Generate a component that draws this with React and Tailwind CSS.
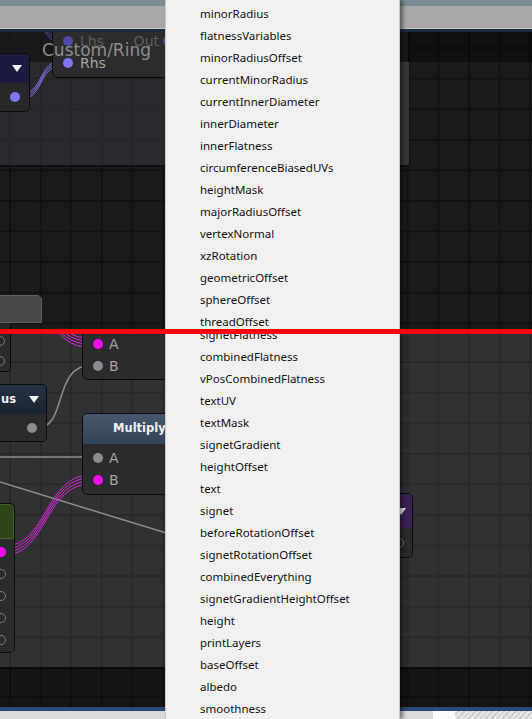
import React from "react";

const topItems = [
  "minorRadius",
  "flatnessVariables",
  "minorRadiusOffset",
  "currentMinorRadius",
  "currentInnerDiameter",
  "innerDiameter",
  "innerFlatness",
  "circumferenceBiasedUVs",
  "heightMask",
  "majorRadiusOffset",
  "vertexNormal",
  "xzRotation",
  "geometricOffset",
  "sphereOffset",
  "threadOffset",
];

const bottomItems = [
  "signetFlatness",
  "combinedFlatness",
  "vPosCombinedFlatness",
  "textUV",
  "textMask",
  "signetGradient",
  "heightOffset",
  "text",
  "signet",
  "beforeRotationOffset",
  "signetRotationOffset",
  "combinedEverything",
  "signetGradientHeightOffset",
  "height",
  "printLayers",
  "baseOffset",
  "albedo",
  "smoothness",
];

function Menu({ items, first }) {
  return (
    <div className="absolute bottom-0 left-[165px] top-0 w-[235px] overflow-hidden border-l border-r border-[#c9c9c9] bg-[#f0f0f0] shadow-[3px_0_4px_rgba(0,0,0,0.45)]">
      <ul className={first ? "pt-[3px]" : "-mt-[10px]"}>
        {items.map((name) => (
          <li
            key={name}
            className="flex h-[22px] items-center pl-[34px] font-['Noto_Sans',sans-serif] text-[11.5px] text-[#111]"
          >
            {name}
          </li>
        ))}
      </ul>
    </div>
  );
}

function Wire({ d, color, offsets, width = 1 }) {
  return offsets.map((o) => (
    <path
      key={o}
      d={d}
      transform={`translate(0 ${o})`}
      fill="none"
      stroke={color}
      strokeWidth={width}
    />
  ));
}

function Caret() {
  return (
    <svg width="10" height="7" viewBox="0 0 10 7" className="shrink-0">
      <path d="M0 0h10L5 7z" fill="#f2f2f2" />
    </svg>
  );
}

const Dot = ({ color }) => (
  <span className="block h-[10px] w-[10px] shrink-0 rounded-full" style={{ background: color }} />
);

const Ring = () => (
  <span className="block h-[10px] w-[10px] shrink-0 rounded-full border-[1.5px] border-[#7c7c7c]" />
);

const MAGENTA = "#f00ef0";
const GRAY = "#8c8c8c";
const PURPLE = "#7b78f0";

function TopPane() {
  return (
    <div className="relative flex h-[329px] flex-col overflow-hidden">
      <div className="h-[6px] bg-[#7c8d92]" />
      <div className="h-[23px] border-b border-[#c4c4c4] bg-[#a8a8a8]" />
      <div className="h-[3px] bg-[#1e2c43]" />
      <div className="relative flex-1 overflow-hidden bg-[#1b1b1e] bg-[linear-gradient(to_right,#121214_2px,transparent_2px),linear-gradient(to_bottom,#121214_2px,transparent_2px)] bg-[length:30.6px_30.6px] bg-[position:9px_15px] font-['DejaVu_Sans',sans-serif]">
        {/* group */}
        <div className="absolute left-[-10px] top-0 h-[135px] w-[420px] rounded-br-[4px] border-b-2 border-r-2 border-[#101012] bg-[#3a3a3e]/50" />
        <div className="absolute left-[360px] top-[30px] h-[104px] w-[50px] rounded-br-[4px] border-b border-r border-[#121214] bg-[#38383b]" />
        {/* title band */}
        <div className="absolute left-0 right-0 top-0 h-[30px] bg-black/40" />

        <svg className="absolute left-0 top-0 overflow-visible" width="532" height="297">
          <Wire d="M20 65 C44 65 38 31 62 31" color={PURPLE} offsets={[-2.5, 0, 2.5]} />
          <Wire d="M26 -14 C48 -14 42 8 62 8" color="#4a48a0" offsets={[-2.5, 0, 2.5]} />
        </svg>

        {/* indigo node */}
        <div className="absolute left-[-12px] top-[21px] w-[42px] overflow-hidden rounded-r-[5px] border border-[#0b0b0c]">
          <div className="flex h-[29px] items-center justify-end bg-[#1c1a3f] pr-[7px]">
            <Caret />
          </div>
          <div className="flex h-[28px] items-center justify-end bg-[#28282b] pr-[9px]">
            <Dot color={PURPLE} />
          </div>
        </div>

        {/* Lhs / Rhs node */}
        <div className="absolute left-[52px] top-[-4px] w-[130px] rounded-bl-[5px] border border-[#0b0b0c] bg-[#2c2c2f] pb-[3px] pl-[10px] pr-[8px] pt-[1px] text-[14px]">
          <div className="flex h-[22px] items-center">
            <Dot color="#4d4ba8" />
            <span className="ml-[7px] text-[#5c5c5e]">Lhs</span>
            <span className="ml-auto mr-[4px] text-[#5c5c5e]">Out</span>
            <Dot color="#4d4ba8" />
          </div>
          <div className="flex h-[22px] items-center">
            <Dot color={PURPLE} />
            <span className="ml-[7px] text-[#a4a4a4]">Rhs</span>
          </div>
        </div>

        {/* left node header */}
        <div className="absolute left-[-20px] top-[263px] h-[28px] w-[62px] rounded-tr-[5px] border border-[#5f5f62] bg-[#48484b]" />
        <div className="absolute left-[-20px] top-[291px] h-[10px] w-[31px] border-r border-[#0e0e0f] bg-[#262629]" />

        <div className="absolute left-[42px] top-[6px] text-[17px] leading-[24px] text-[#8d8d8d]">
          Custom/Ring
        </div>
      </div>
      <Menu items={topItems} first />
    </div>
  );
}

function BottomPane() {
  return (
    <div className="relative flex h-[385px] flex-col overflow-hidden">
      <div className="relative h-[333px] overflow-hidden bg-[#313134] bg-[linear-gradient(to_right,#29292c_2px,transparent_2px),linear-gradient(to_bottom,#29292c_2px,transparent_2px)] bg-[length:30.6px_30.6px] bg-[position:9px_27px] font-['DejaVu_Sans',sans-serif]">
        <svg className="absolute left-0 top-0 overflow-visible" width="532" height="333">
          <Wire d="M8 -42 C58 -42 44 9 92 9" color="#d82ad8" offsets={[-4.5, -1.5, 1.5, 4.5]} />
          <Wire d="M37 94 C68 94 52 31 92 31" color={GRAY} offsets={[0]} width={1.5} />
          <Wire d="M-5 123 L92 123" color={GRAY} offsets={[0]} width={1.5} />
          <Wire d="M0 148 L300 240" color={GRAY} offsets={[0]} width={1.5} />
          <Wire d="M3 217 C48 217 44 145 92 145" color="#d82ad8" offsets={[-4.5, -1.5, 1.5, 4.5]} />
        </svg>

        {/* partial left node */}
        <div className="absolute left-[-20px] top-[-10px] h-[48px] w-[31px] rounded-br-[4px] border border-[#0b0b0c] bg-[#2b2b2e]">
          <div className="absolute left-[14px] top-[11px]"><Ring /></div>
          <div className="absolute left-[14px] top-[31px]"><Ring /></div>
        </div>

        {/* A / B node */}
        <div className="absolute left-[82px] top-[-20px] w-[130px] rounded-bl-[5px] border border-[#0b0b0c] bg-[#2b2b2e] pb-[2px] pl-[10px] pt-[18px] text-[14px] text-[#a4a4a4]">
          <div className="flex h-[22px] items-center">
            <Dot color={MAGENTA} />
            <span className="ml-[6px]">A</span>
          </div>
          <div className="flex h-[22px] items-center">
            <Dot color={GRAY} />
            <span className="ml-[6px]">B</span>
          </div>
        </div>

        {/* ...us node */}
        <div className="absolute left-[-30px] top-[50px] w-[77px] overflow-hidden rounded-r-[5px] border border-[#0b0b0c]">
          <div className="flex h-[29px] items-center justify-between bg-[linear-gradient(to_bottom,#253244,#1b2431)] pl-[30px] pr-[7px] text-[11.5px] font-bold text-[#f2f2f2]">
            <span>us</span>
            <Caret />
          </div>
          <div className="flex h-[27px] items-center justify-end bg-[#2b2b2e] pr-[9px]">
            <Dot color={GRAY} />
          </div>
        </div>

        {/* Multiply node */}
        <div className="absolute left-[82px] top-[79px] w-[130px] overflow-hidden rounded-l-[5px] border border-[#0b0b0c]">
          <div className="flex h-[30px] items-center bg-[linear-gradient(to_bottom,#46586e,#33435a)] pl-[30px] text-[11.5px] font-bold text-[#f2f2f2]">
            Multiply
          </div>
          <div className="bg-[#2b2b2e] pb-[3px] pl-[10px] pt-[3px] text-[14px] text-[#a4a4a4]">
            <div className="flex h-[22px] items-center">
              <Dot color={GRAY} />
              <span className="ml-[6px]">A</span>
            </div>
            <div className="flex h-[22px] items-center">
              <Dot color={MAGENTA} />
              <span className="ml-[6px]">B</span>
            </div>
          </div>
        </div>

        {/* green node */}
        <div className="absolute left-[-30px] top-[169px] w-[45px] overflow-hidden rounded-r-[5px] border border-[#0b0b0c]">
          <div className="h-[35px] rounded-tr-[5px] border border-[#41602a] bg-[#2d4519]" />
          <div className="flex flex-col bg-[#2b2b2e] pb-[1px] pl-[25px] pt-[2px]">
            <div className="flex h-[22px] items-center"><Dot color={MAGENTA} /></div>
            <div className="flex h-[22px] items-center"><Ring /></div>
            <div className="flex h-[22px] items-center"><Ring /></div>
            <div className="flex h-[22px] items-center"><Ring /></div>
            <div className="flex h-[22px] items-center"><Ring /></div>
          </div>
        </div>

        {/* purple node */}
        <div className="absolute left-[330px] top-[159px] w-[83px] overflow-hidden rounded-r-[5px] border border-[#0b0b0c]">
          <div className="flex h-[34px] items-center justify-end bg-[#3a2354] pr-[6px]">
            <Caret />
          </div>
          <div className="flex h-[29px] items-center justify-end bg-[#2b2b2e] pr-[8px]">
            <Ring />
          </div>
        </div>
      </div>
      <div className="h-[40px] border-t-2 border-[#0a0a0b] bg-[#151518] bg-[linear-gradient(to_right,#0e0e10_2px,transparent_2px),linear-gradient(to_bottom,#0e0e10_2px,transparent_2px)] bg-[length:30.6px_30.6px] bg-[position:9px_27px]" />
      <div className="h-[4px] bg-[#2c4a77]" />
      <div className="flex h-[8px]">
        <div className="w-[433px] bg-[#d9d9d9]" />
        <div className="w-[22px] bg-[#fbfbfb]" />
        <div className="flex-1 bg-[#dcdcdc] bg-[repeating-linear-gradient(135deg,#e8e8e8_0px,#e8e8e8_2px,#cfcfcf_2px,#cfcfcf_4px)]" />
      </div>
      <Menu items={bottomItems} />
    </div>
  );
}

export default function App() {
  return (
    <div className="flex h-[719px] w-[532px] flex-col overflow-hidden bg-[#1b1b1e]">
      <TopPane />
      <div className="h-[5px] bg-[#ff0000]" />
      <BottomPane />
    </div>
  );
}
